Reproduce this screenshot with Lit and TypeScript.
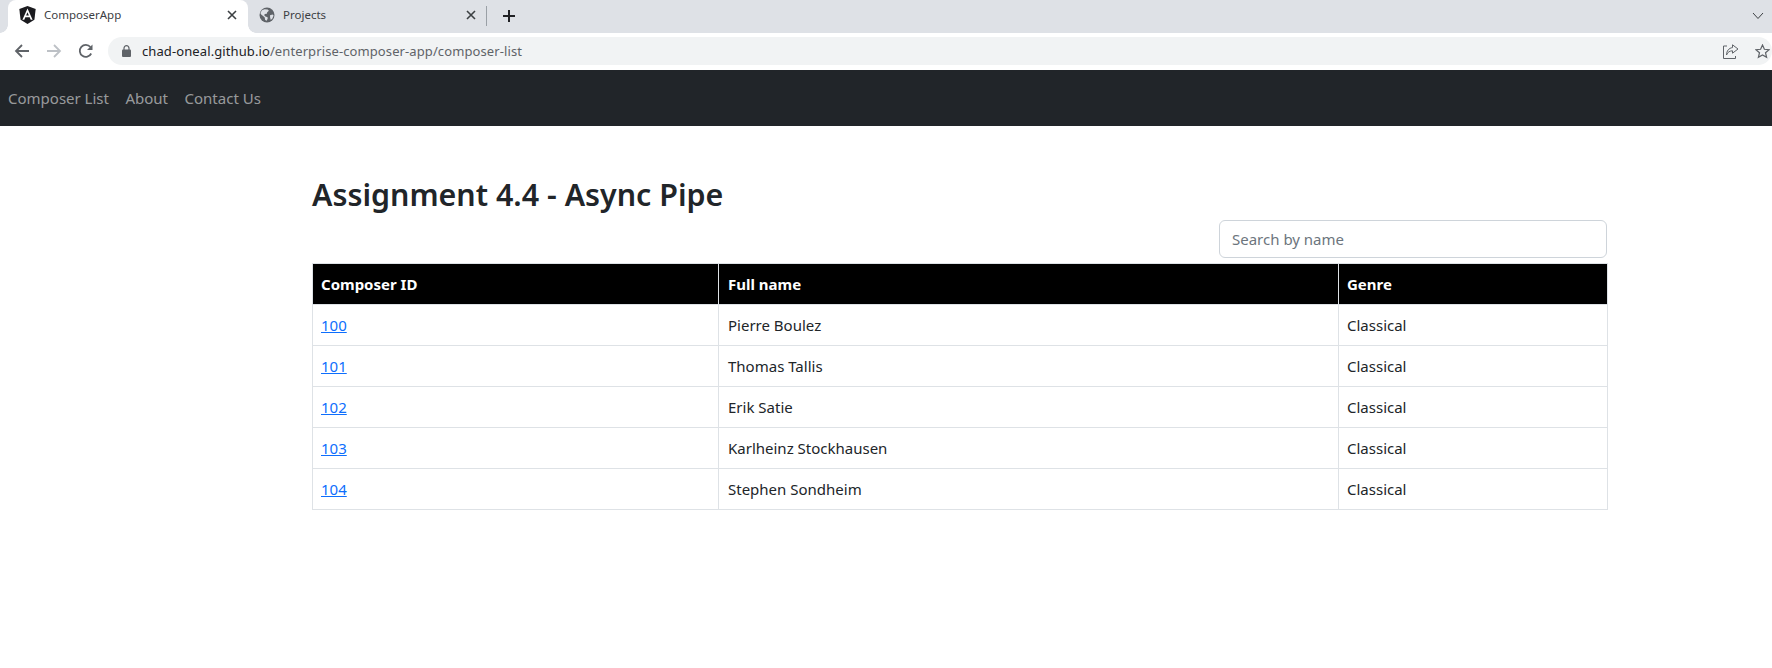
import { LitElement, html, css, svg } from "lit";
import { customElement } from "lit/decorators.js";

const composers = [
  { id: 100, name: "Pierre Boulez", genre: "Classical" },
  { id: 101, name: "Thomas Tallis", genre: "Classical" },
  { id: 102, name: "Erik Satie", genre: "Classical" },
  { id: 103, name: "Karlheinz Stockhausen", genre: "Classical" },
  { id: 104, name: "Stephen Sondheim", genre: "Classical" },
];

const closeIcon = svg`<svg class="close" width="10" height="10" viewBox="0 0 10 10"><path d="M1 1l8 8M9 1l-8 8" stroke="#3c4043" stroke-width="1.6" fill="none"/></svg>`;

const angularIcon = svg`<svg width="17" height="18" viewBox="0 0 17 18"><path d="M8.5 0L16.7 2.9 15.4 13.8 8.5 18 1.6 13.8 .3 2.9z" fill="#1b1b1f"/><path d="M8.5 2.4L3.4 13.8h1.9l1-2.6h4.4l1 2.6h1.9zM9.9 9.6H7.1l1.4-3.4z" fill="#fff"/></svg>`;

const globeIcon = svg`<svg width="16" height="16" viewBox="0 0 16 16"><circle cx="8" cy="8" r="7.5" fill="#5f6368"/><path d="M3 3.2l2.6-.9 3.1.2 1.2 1.3-1.7 1.4-.4 1.5-2 .4-.6 1.2 1.6 1.4 1.6.2.3 1.7-1 2.2-1.5-.9-.6-2.6L2.2 7.4 1.4 6zM11 8.2l2.6-.6 1 1-1.2 3-1.6 1.4-.7-2.4z" fill="#dee1e6"/></svg>`;

@customElement("app-root")
export class AppRoot extends LitElement {
  static styles = css`
    :host {
      display: block;
      min-height: 668px;
      background: #fff;
      font-family: "Noto Sans", "Open Sans", sans-serif;
      color: #212529;
    }
    .tabstrip {
      display: flex;
      align-items: flex-end;
      height: 33px;
      background: #dee1e6;
      padding-left: 8px;
      font-size: 11.5px;
      color: #3c4043;
    }
    .tab {
      position: relative;
      display: flex;
      align-items: center;
      height: 33px;
      box-sizing: border-box;
      padding-bottom: 4px;
      border-radius: 8px 8px 0 0;
    }
    .tab span {
      flex: 1;
    }
    .tab.active {
      width: 240px;
      gap: 8.5px;
      padding-left: 10.5px;
      padding-right: 11px;
      background: #fff;
    }
    .tab.active::before,
    .tab.active::after {
      content: "";
      position: absolute;
      bottom: 0;
      width: 8px;
      height: 8px;
      background: radial-gradient(circle at var(--cx) 0, #dee1e6 7.5px, #fff 8px);
    }
    .tab.active::before {
      --cx: 0;
      left: -8px;
    }
    .tab.active::after {
      --cx: 100%;
      right: -8px;
    }
    .tab.other {
      width: 238px;
      gap: 8px;
      padding-left: 11px;
      padding-right: 10px;
    }
    .divider {
      width: 1px;
      height: 20px;
      margin-bottom: 7px;
      background: #9aa0a6;
    }
    .plus {
      margin: 0 0 10px 15px;
    }
    .chevron {
      margin: 0 8px 13px auto;
    }
    .toolbar {
      display: flex;
      align-items: center;
      height: 37px;
      box-sizing: border-box;
      padding: 0 0 1px 14px;
      gap: 16px;
      background: #fff;
    }
    .address {
      flex: 1;
      display: flex;
      align-items: center;
      height: 28px;
      margin-left: -2px;
      padding: 0 2px 0 13.5px;
      gap: 11.5px;
      border-radius: 14px;
      background: #f1f3f4;
      font-size: 13px;
      letter-spacing: 0.1px;
      color: #5f6368;
    }
    .address .host {
      color: #202124;
    }
    .address .url {
      flex: 1;
    }
    .address .actions {
      display: flex;
      align-items: center;
      gap: 16px;
    }
    nav {
      display: flex;
      align-items: center;
      height: 56px;
      padding-left: 8px;
      gap: 16.5px;
      background: #212529;
      font-size: 15px;
    }
    nav a {
      color: rgba(255, 255, 255, 0.55);
      text-decoration: none;
    }
    main {
      width: 1295px;
      margin-left: 312px;
      padding-top: 44px;
    }
    h1 {
      margin: 0;
      height: 50px;
      font-size: 30.4px;
      line-height: 50px;
      font-weight: 600;
    }
    .search-row {
      display: flex;
      justify-content: flex-end;
      margin-bottom: 5px;
    }
    input {
      box-sizing: border-box;
      width: 388px;
      height: 38px;
      padding: 6px 12px;
      border: 1px solid #ced4da;
      border-radius: 6px;
      font: inherit;
      font-size: 15px;
      color: #212529;
      outline: none;
    }
    input::placeholder {
      color: #6c757d;
      opacity: 1;
    }
    table {
      width: 1295px;
      table-layout: fixed;
      border-collapse: collapse;
      font-size: 15px;
    }
    th,
    td {
      height: 41px;
      box-sizing: border-box;
      padding: 8px;
      border: 1px solid #dee2e6;
      text-align: left;
      line-height: 24px;
    }
    th:nth-child(2),
    td:nth-child(2) {
      padding-left: 9px;
    }
    th {
      background: #000;
      color: #fff;
      font-weight: 700;
    }
    td a {
      color: #0d6efd;
    }
    col.id {
      width: 406px;
    }
    col.name {
      width: 620px;
    }
    col.genre {
      width: 269px;
    }
  `;

  render() {
    return html`
      <div class="tabstrip">
        <div class="tab active">${angularIcon}<span>ComposerApp</span>${closeIcon}</div>
        <div class="tab other">${globeIcon}<span>Projects</span>${closeIcon}</div>
        <div class="divider"></div>
        <svg class="plus" width="14" height="14" viewBox="0 0 14 14"><path d="M7 1v12M1 7h12" stroke="#202124" stroke-width="2" fill="none"/></svg>
        <svg class="chevron" width="12" height="8" viewBox="0 0 12 8"><path d="M1 1l5 5.5L11 1" stroke="#3c4043" stroke-width="1" fill="none"/></svg>
      </div>
      <div class="toolbar">
        <svg width="16" height="16" viewBox="0 0 16 16"><path d="M15 8H2M8 2L2 8l6 6" stroke="#5f6368" stroke-width="1.8" fill="none"/></svg>
        <svg width="16" height="16" viewBox="0 0 16 16"><path d="M1 8h13M8 2l6 6-6 6" stroke="#bdc1c6" stroke-width="1.8" fill="none"/></svg>
        <svg width="16" height="16" viewBox="0 0 16 16"><path d="M13.2 10.5A6 6 0 1 1 12.4 4" stroke="#5f6368" stroke-width="1.8" fill="none"/><path d="M14.5 1.5v5.5H9z" fill="#5f6368"/></svg>
        <div class="address">
          <svg width="9" height="12" viewBox="0 0 9 12"><path d="M2 5V3.2a2.5 2.5 0 0 1 5 0V5" stroke="#5f6368" stroke-width="1.2" fill="none"/><rect y="4.5" width="9" height="7.5" rx="1" fill="#5f6368"/></svg>
          <div class="url"><span class="host">chad-oneal.github.io</span>/enterprise-composer-app/composer-list</div>
          <div class="actions">
            <svg width="16" height="15" viewBox="0 0 16 15"><path d="M4 2H.5v12.5h12V12" stroke="#5f6368" fill="none"/><path d="M9.5 .8L15 5l-5.5 4.2V6.8C7 6.8 4.6 8 3.5 11c0-4 2.4-7 6-7.4z" stroke="#5f6368" fill="none"/></svg>
            <svg width="15" height="15" viewBox="0 0 15 15"><path d="M7.5 1l1.9 4.3 4.6.4-3.5 3 1.1 4.6-4.1-2.4-4.1 2.4 1.1-4.6-3.5-3 4.6-.4z" stroke="#5f6368" stroke-width="1.2" fill="none"/></svg>
          </div>
        </div>
      </div>
      <nav>
        <a href="#">Composer List</a>
        <a href="#">About</a>
        <a href="#">Contact Us</a>
      </nav>
      <main>
        <h1>Assignment 4.4 - Async Pipe</h1>
        <div class="search-row"><input type="text" placeholder="Search by name" /></div>
        <table>
          <colgroup>
            <col class="id" />
            <col class="name" />
            <col class="genre" />
          </colgroup>
          <thead>
            <tr><th>Composer ID</th><th>Full name</th><th>Genre</th></tr>
          </thead>
          <tbody>
            ${composers.map(
              (c) => html`<tr><td><a href="#">${c.id}</a></td><td>${c.name}</td><td>${c.genre}</td></tr>`
            )}
          </tbody>
        </table>
      </main>
    `;
  }
}
